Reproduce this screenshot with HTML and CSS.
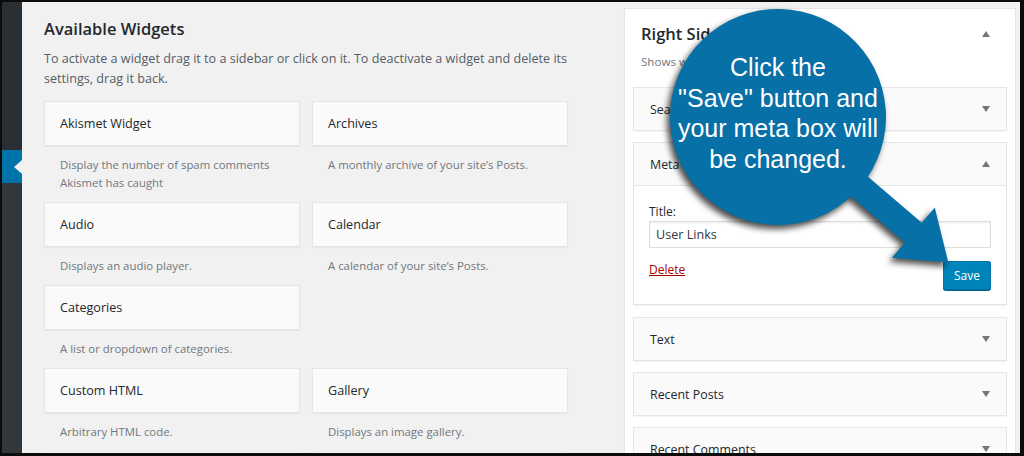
FILE: index.html
```html
<!DOCTYPE html>
<html>
<head>
    <meta charset="UTF-8">
    <title>Widgets</title>
    <link rel="stylesheet" href="styles.css">
</head>
<body>
<div class="screen">
    <div class="adminmenu">
        <div class="menu-top"></div>
        <div class="menu-current"><span class="menu-pointer"></span></div>
        <div class="menu-rest"></div>
    </div>

    <div class="main">
        <section class="available">
            <h2 class="section-title">Available Widgets</h2>
            <p class="intro">To activate a widget drag it to a sidebar or click on it. To deactivate a widget and delete its settings, drag it back.</p>
            <div class="widget-grid">
                <div class="widget">
                    <div class="widget-top">Akismet Widget</div>
                    <div class="widget-desc">Display the number of spam comments Akismet has caught</div>
                </div>
                <div class="widget">
                    <div class="widget-top">Archives</div>
                    <div class="widget-desc">A monthly archive of your site’s Posts.</div>
                </div>
                <div class="widget">
                    <div class="widget-top">Audio</div>
                    <div class="widget-desc">Displays an audio player.</div>
                </div>
                <div class="widget">
                    <div class="widget-top">Calendar</div>
                    <div class="widget-desc">A calendar of your site’s Posts.</div>
                </div>
                <div class="widget">
                    <div class="widget-top">Categories</div>
                    <div class="widget-desc">A list or dropdown of categories.</div>
                </div>
                <div class="widget empty"></div>
                <div class="widget">
                    <div class="widget-top">Custom HTML</div>
                    <div class="widget-desc">Arbitrary HTML code.</div>
                </div>
                <div class="widget">
                    <div class="widget-top">Gallery</div>
                    <div class="widget-desc">Displays an image gallery.</div>
                </div>
                <div class="widget">
                    <div class="widget-top">Image</div>
                    <div class="widget-desc">Displays an image.</div>
                </div>
                <div class="widget">
                    <div class="widget-top">Meta</div>
                    <div class="widget-desc">Login, RSS, &amp; WordPress.org links.</div>
                </div>
            </div>
        </section>

        <section class="sidebar-panel">
            <div class="panel-head">
                <h2 class="section-title">Right Sidebar</h2>
                <svg class="toggle" width="10" height="6" viewBox="0 0 10 6"><polygon points="1,6 5,0 9,6"/></svg>
            </div>
            <p class="panel-desc">Shows widgets in the right sidebar.</p>

            <div class="sb-widget">
                <div class="sb-top"><span>Search</span><svg class="toggle" width="10" height="6" viewBox="0 0 10 6"><polygon points="1,0 9,0 5,6"/></svg></div>
            </div>
            <div class="sb-widget open">
                <div class="sb-top"><span>Meta</span><svg class="toggle" width="10" height="6" viewBox="0 0 10 6"><polygon points="1,6 5,0 9,6"/></svg></div>
                <div class="sb-inside">
                    <label class="field-label">Title:</label>
                    <div class="field-input">User Links</div>
                    <div class="sb-actions">
                        <a class="delete-link">Delete</a>
                        <button class="save-btn">Save</button>
                    </div>
                </div>
            </div>
            <div class="sb-widget">
                <div class="sb-top"><span>Text</span><svg class="toggle" width="10" height="6" viewBox="0 0 10 6"><polygon points="1,0 9,0 5,6"/></svg></div>
            </div>
            <div class="sb-widget">
                <div class="sb-top"><span>Recent Posts</span><svg class="toggle" width="10" height="6" viewBox="0 0 10 6"><polygon points="1,0 9,0 5,6"/></svg></div>
            </div>
            <div class="sb-widget">
                <div class="sb-top"><span>Recent Comments</span><svg class="toggle" width="10" height="6" viewBox="0 0 10 6"><polygon points="1,0 9,0 5,6"/></svg></div>
            </div>
        </section>
    </div>

    <!-- callout drawn over the screenshot -->
    <svg class="callout-shape" width="1024" height="456" viewBox="0 0 1024 456">
        <g transform="translate(778 117) rotate(40.5)">
            <circle r="108"/>
            <polygon points="0,-13 178,-13 178,-33 224,0 178,33 178,13 0,13"/>
        </g>
    </svg>
    <div class="callout-text">Click the<br>"Save" button and<br>your meta box will<br>be changed.</div>
</div>
</body>
</html>
```

FILE: styles.css
```css
body {
  margin: 0;
  width: 1024px;
  height: 456px;
  overflow: hidden;
  font-family: "Open Sans", "Noto Sans", sans-serif;
}

.screen {
  position: relative;
  display: flex;
  height: 456px;
  box-sizing: border-box;
  padding: 2px 4px 3px 2px;
  background-color: #0b0b0b;
}

/* admin menu strip */
.adminmenu {
  width: 20px;
  flex: none;
  display: flex;
  flex-direction: column;
}

.menu-top {
  height: 148px;
  background-color: #2a2f34;
}

.menu-current {
  height: 33px;
  background-color: #0073aa;
  display: flex;
  align-items: center;
  justify-content: flex-end;
}

.menu-pointer {
  width: 0;
  height: 0;
  border-top: 7px solid transparent;
  border-bottom: 7px solid transparent;
  border-right: 8px solid #f1f1f1;
}

.menu-rest {
  flex: 1;
  background-color: #32373c;
}

.main {
  flex: 1;
  display: flex;
  background-color: #f1f1f1;
  overflow: hidden;
}

/* left column */
.available {
  width: 602px;
  flex: none;
  box-sizing: border-box;
  padding: 16px 0 0 22px;
}

.section-title {
  margin: 0;
  font-size: 16.5px;
  line-height: 22px;
  font-weight: 600;
  color: #23282d;
}

.intro {
  margin: 9px 0 12px;
  max-width: 528px;
  font-size: 12.6px;
  line-height: 20px;
  color: #555d66;
}

.widget-grid {
  display: grid;
  grid-template-columns: 256px 256px;
  column-gap: 12px;
  align-items: start;
}

.widget-top {
  height: 45px;
  box-sizing: border-box;
  display: flex;
  align-items: center;
  padding: 0 15px;
  background-color: #fafafa;
  border: 1px solid #e5e5e5;
  box-shadow: 0 1px 1px rgba(0, 0, 0, 0.04);
  font-size: 12.6px;
  font-weight: 500;
  color: #23282d;
}

.widget-desc {
  padding: 10px 16px;
  font-size: 11.4px;
  line-height: 18px;
  color: #72777c;
}

/* right sidebar box */
.sidebar-panel {
  width: 392px;
  flex: none;
  box-sizing: border-box;
  margin-top: 6px;
  align-self: flex-start;
  padding: 0 8px 20px;
  background-color: #fff;
  border: 1px solid #e5e5e5;
  box-shadow: 0 1px 1px rgba(0, 0, 0, 0.04);
}

.panel-head {
  display: flex;
  align-items: center;
  justify-content: space-between;
  padding: 14px 16px 0 8px;
}

.panel-desc {
  margin: 7px 0 15px 8px;
  font-size: 11.6px;
  line-height: 20px;
  color: #72777c;
}

.toggle {
  fill: #72777c;
}

.sb-widget {
  margin-bottom: 11px;
  border: 1px solid #e5e5e5;
  background-color: #fafafa;
  box-shadow: 0 1px 1px rgba(0, 0, 0, 0.04);
}

.sb-top {
  height: 42px;
  display: flex;
  align-items: center;
  justify-content: space-between;
  padding: 0 15px 0 16px;
  font-size: 12.4px;
  font-weight: 500;
  color: #23282d;
}

.sb-widget.open {
  margin-bottom: 12px;
}

.sb-inside {
  background-color: #fff;
  border-top: 1px solid #e5e5e5;
  padding: 17px 15px 14px;
}

.field-label {
  display: block;
  font-size: 12px;
  line-height: 18px;
  color: #23282d;
}

.field-input {
  height: 27px;
  box-sizing: border-box;
  padding: 0 6px;
  display: flex;
  align-items: center;
  border: 1px solid #ddd;
  box-shadow: inset 0 1px 2px rgba(0, 0, 0, 0.07);
  font-size: 12.6px;
  color: #32373c;
}

.sb-actions {
  display: flex;
  justify-content: space-between;
  align-items: flex-start;
  margin-top: 13px;
}

.delete-link {
  margin-top: 0;
  font-size: 12px;
  line-height: 18px;
  color: #a00;
  text-decoration: underline;
}

.save-btn {
  width: 48px;
  height: 29px;
  padding: 0;
  font-family: inherit;
  font-size: 12px;
  color: #fff;
  background-color: #0085ba;
  border: 1px solid #0073aa;
  border-bottom-color: #006799;
  border-radius: 3px;
  box-shadow: 0 1px 0 #006799;
}

/* callout */
.callout-shape {
  position: absolute;
  left: 0;
  top: 0;
  fill: #0770a6;
  filter: drop-shadow(-3px 4px 3px rgba(0, 0, 0, 0.7));
}

.callout-text {
  position: absolute;
  left: 668px;
  top: 52px;
  width: 220px;
  text-align: center;
  font-family: "Liberation Sans", Arial, sans-serif;
  font-size: 25px;
  line-height: 30.5px;
  color: #fff;
}
```
